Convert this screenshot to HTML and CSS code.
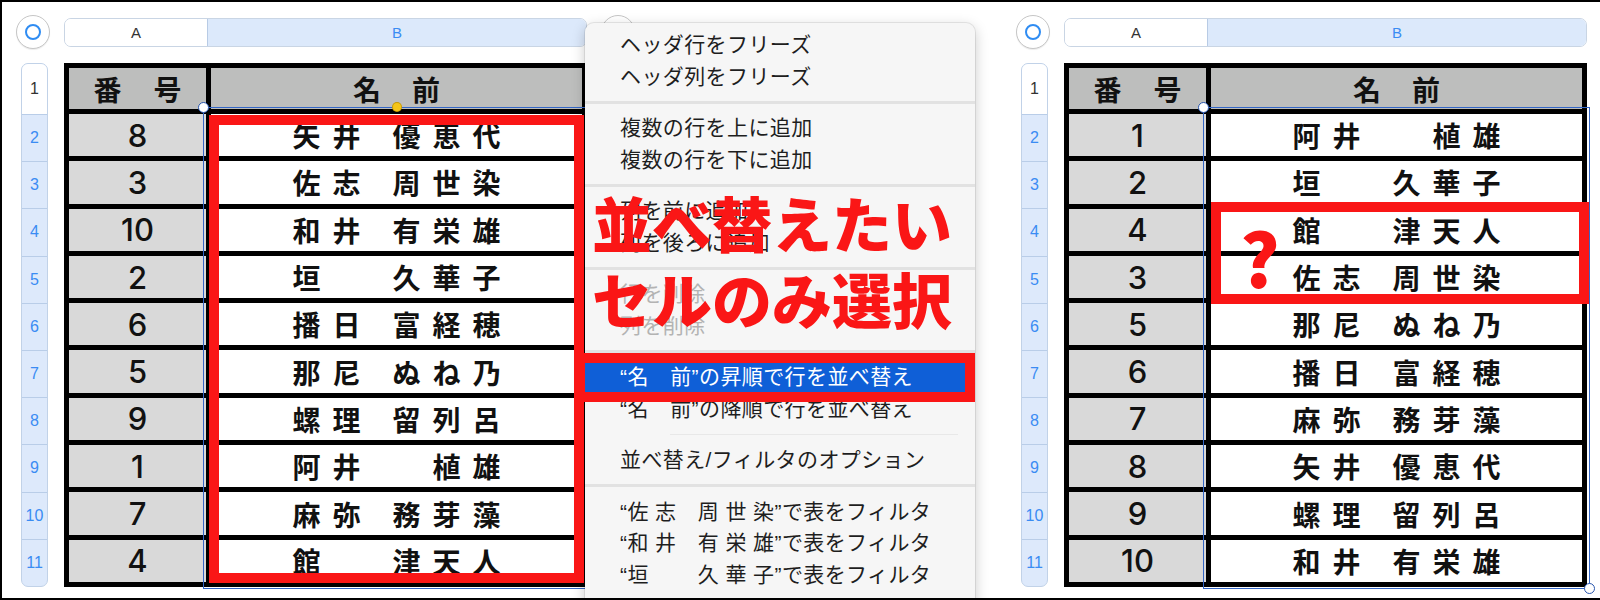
FILE: index.html
```html
<!DOCTYPE html>
<html lang="ja">
<head>
<meta charset="utf-8">
<title>並べ替え</title>
<link rel="stylesheet" href="styles.css">
</head>
<body>
<div class="frame">
  <div class="sheet">
    <div class="corner"><span class="corner-ring"></span></div>
    <div class="colbar">
      <div class="colhead col-a">A</div>
      <div class="colhead col-b">B</div>
    </div>
    <div class="addcol"></div>
    <div class="rowbar">
      <div class="rowhead first">1</div>
      <div class="rowhead">2</div>
      <div class="rowhead">3</div>
      <div class="rowhead">4</div>
      <div class="rowhead">5</div>
      <div class="rowhead">6</div>
      <div class="rowhead">7</div>
      <div class="rowhead">8</div>
      <div class="rowhead">9</div>
      <div class="rowhead">10</div>
      <div class="rowhead">11</div>
    </div>
    <div class="table">
      <div class="cell head hnum"><span>番</span><span>号</span></div>
      <div class="cell head hname"><span>名</span><span>前</span></div>
      <div class="cell num">8</div><div class="cell name"><span class="sei">矢井</span><span class="mei">優恵代</span></div>
      <div class="cell num">3</div><div class="cell name"><span class="sei">佐志</span><span class="mei">周世染</span></div>
      <div class="cell num">10</div><div class="cell name"><span class="sei">和井</span><span class="mei">有栄雄</span></div>
      <div class="cell num">2</div><div class="cell name"><span class="sei">垣　</span><span class="mei">久華子</span></div>
      <div class="cell num">6</div><div class="cell name"><span class="sei">播日</span><span class="mei">富経穂</span></div>
      <div class="cell num">5</div><div class="cell name"><span class="sei">那尼</span><span class="mei">ぬね乃</span></div>
      <div class="cell num">9</div><div class="cell name"><span class="sei">螺理</span><span class="mei">留列呂</span></div>
      <div class="cell num">1</div><div class="cell name"><span class="sei">阿井</span><span class="mei">　植雄</span></div>
      <div class="cell num">7</div><div class="cell name"><span class="sei">麻弥</span><span class="mei">務芽藻</span></div>
      <div class="cell num">4</div><div class="cell name"><span class="sei">館　</span><span class="mei">津天人</span></div>
    </div>
  </div>

  <div class="sheet right">
    <div class="corner"><span class="corner-ring"></span></div>
    <div class="colbar">
      <div class="colhead col-a">A</div>
      <div class="colhead col-b">B</div>
    </div>
    <div class="addcol"></div>
    <div class="rowbar">
      <div class="rowhead first">1</div>
      <div class="rowhead">2</div>
      <div class="rowhead">3</div>
      <div class="rowhead">4</div>
      <div class="rowhead">5</div>
      <div class="rowhead">6</div>
      <div class="rowhead">7</div>
      <div class="rowhead">8</div>
      <div class="rowhead">9</div>
      <div class="rowhead">10</div>
      <div class="rowhead">11</div>
    </div>
    <div class="table">
      <div class="cell head hnum"><span>番</span><span>号</span></div>
      <div class="cell head hname"><span>名</span><span>前</span></div>
      <div class="cell num">1</div><div class="cell name"><span class="sei">阿井</span><span class="mei">　植雄</span></div>
      <div class="cell num">2</div><div class="cell name"><span class="sei">垣　</span><span class="mei">久華子</span></div>
      <div class="cell num">4</div><div class="cell name"><span class="sei">館　</span><span class="mei">津天人</span></div>
      <div class="cell num">3</div><div class="cell name"><span class="sei">佐志</span><span class="mei">周世染</span></div>
      <div class="cell num">5</div><div class="cell name"><span class="sei">那尼</span><span class="mei">ぬね乃</span></div>
      <div class="cell num">6</div><div class="cell name"><span class="sei">播日</span><span class="mei">富経穂</span></div>
      <div class="cell num">7</div><div class="cell name"><span class="sei">麻弥</span><span class="mei">務芽藻</span></div>
      <div class="cell num">8</div><div class="cell name"><span class="sei">矢井</span><span class="mei">優恵代</span></div>
      <div class="cell num">9</div><div class="cell name"><span class="sei">螺理</span><span class="mei">留列呂</span></div>
      <div class="cell num">10</div><div class="cell name"><span class="sei">和井</span><span class="mei">有栄雄</span></div>
    </div>
  </div>

  <div class="sel sel-left"></div>
  <div class="handle h-left"></div>
  <div class="ydot"></div>
  <div class="sel sel-right"></div>
  <div class="handle h-right"></div>
  <div class="handle h-br"></div>

  <div class="menu">
    <div class="mi">ヘッダ行をフリーズ</div>
    <div class="mi">ヘッダ列をフリーズ</div>
    <div class="msep"></div>
    <div class="mi">複数の行を上に追加</div>
    <div class="mi">複数の行を下に追加</div>
    <div class="msep"></div>
    <div class="mi">列を前に追加</div>
    <div class="mi">列を後ろに追加</div>
    <div class="msep"></div>
    <div class="mi off">行を削除</div>
    <div class="mi off">列を削除</div>
    <div class="msep"></div>
    <div class="mi on">“名　前”の昇順で行を並べ替え</div>
    <div class="mi">“名　前”の降順で行を並べ替え</div>
    <div class="msep thin"></div>
    <div class="mi">並べ替え/フィルタのオプション</div>
    <div class="msep"></div>
    <div class="mi">“佐 志　周 世 染”で表をフィルタ</div>
    <div class="mi">“和 井　有 栄 雄”で表をフィルタ</div>
    <div class="mi">“垣　 　久 華 子”で表をフィルタ</div>
  </div>

  <div class="redbox rb-left"></div>
  <div class="redbox rb-menu"></div>
  <div class="redbox rb-right"></div>
  <div class="callout">並べ替えたい<br>セルのみ選択</div>
  <div class="qmark">?</div>
</div>
</body>
</html>
```

FILE: styles.css
```css
html, body {
  margin: 0;
  padding: 0;
  background: #fff;
}

.frame {
  position: relative;
  width: 1600px;
  height: 600px;
  overflow: hidden;
  background: #fff;
  display: flex;
  font-family: "Liberation Sans", "Noto Sans CJK JP", sans-serif;
}

.frame::after {
  content: "";
  position: absolute;
  inset: 0;
  border-top: 2px solid #000;
  border-left: 2px solid #000;
  border-bottom: 2px solid #000;
  z-index: 20;
  pointer-events: none;
}

/* ---------- sheet ---------- */
.sheet {
  flex: none;
  width: 1000px;
  box-sizing: border-box;
  padding: 15px 0 0 16px;
  display: grid;
  grid-template-columns: 34px 523px 34px;
  grid-template-rows: 34px 524px;
  column-gap: 14px;
  row-gap: 14px;
  align-content: start;
}

.sheet.right {
  width: 600px;
}

.corner {
  width: 34px;
  height: 34px;
  box-sizing: border-box;
  border: 1px solid #c6c6c6;
  border-radius: 50%;
  background: #fff;
  box-shadow: 0 1px 1px rgba(0, 0, 0, 0.08);
  display: flex;
  align-items: center;
  justify-content: center;
}

.corner-ring {
  width: 16px;
  height: 16px;
  box-sizing: border-box;
  border: 2px solid #2f8cf2;
  border-radius: 50%;
}

.addcol {
  width: 34px;
  height: 34px;
  box-sizing: border-box;
  border: 1px solid #c6c6c6;
  border-radius: 50%;
  background: #fff;
}

.colbar {
  align-self: center;
  height: 29px;
  box-sizing: border-box;
  display: flex;
  border: 1px solid #c9d5e4;
  border-radius: 7px;
  overflow: hidden;
  font-size: 15px;
}

.colhead {
  display: flex;
  align-items: center;
  justify-content: center;
}

.col-a {
  width: 142px;
  background: #fff;
  color: #333;
  border-right: 1px solid #b8cbe5;
}

.col-b {
  flex: 1;
  background: #dce9fb;
  color: #3a8cf3;
}

.rowbar {
  width: 27px;
  height: 524px;
  margin-left: 5px;
  box-sizing: border-box;
  border: 1px solid #c1d2e8;
  border-radius: 7px;
  overflow: hidden;
  display: grid;
  grid-template-rows: 50px repeat(10, 1fr);
  background: #dde9fb;
}

.rowhead {
  display: flex;
  align-items: center;
  justify-content: center;
  font-size: 16px;
  color: #3a8cf3;
  border-top: 1px solid #b9cde8;
}

.rowhead.first {
  border-top: none;
  background: #fff;
  color: #333;
}

.table {
  display: grid;
  grid-template-columns: 137px 371px;
  grid-template-rows: 41px repeat(10, 42.3px);
  gap: 5px;
  padding: 5px;
  background: #000;
  width: 523px;
  height: 524px;
  box-sizing: border-box;
}

.cell {
  display: flex;
  align-items: center;
  justify-content: center;
}

.cell.head {
  background: #bdbebd;
  font-family: "Noto Sans CJK JP", sans-serif;
  font-weight: 700;
  font-size: 28px;
  color: #111;
}

.hnum {
  gap: 32px;
}

.hname {
  gap: 31px;
}

.cell.num {
  background: #d9d9d9;
  font-family: Inter, "Liberation Sans", sans-serif;
  font-weight: 500;
  font-size: 31px;
  color: #111;
}

.cell.name {
  background: #fff;
  font-family: "Noto Sans CJK JP", sans-serif;
  font-weight: 700;
  font-size: 28px;
  color: #111;
  white-space: pre;
}

.sei,
.mei {
  letter-spacing: 12px;
}

.mei {
  margin-left: 20px;
  margin-right: -12px;
}

/* ---------- selection ---------- */
.sel {
  position: absolute;
  box-sizing: border-box;
  border: 1px solid #3366c6;
  z-index: 2;
}

.sel-left {
  left: 203px;
  top: 107px;
  width: 420px;
  height: 482px;
}

.sel-right {
  left: 1203px;
  top: 107px;
  width: 387px;
  height: 482px;
}

.handle {
  position: absolute;
  width: 11px;
  height: 11px;
  box-sizing: border-box;
  border: 1.5px solid #2a56ad;
  background: #fff;
  border-radius: 50%;
  z-index: 3;
}

.h-left { left: 198px; top: 102px; }
.h-right { left: 1198px; top: 102px; }
.h-br { left: 1584px; top: 583px; }

.ydot {
  position: absolute;
  left: 393px;
  top: 103px;
  width: 8px;
  height: 8px;
  border-radius: 50%;
  background: #f5c518;
  box-shadow: 0 0 0 1px #c99a00;
  z-index: 3;
}

/* ---------- context menu ---------- */
.menu {
  position: absolute;
  left: 585px;
  top: 23px;
  width: 390px;
  height: 620px;
  box-sizing: border-box;
  padding-top: 6px;
  background: #f6f6f6;
  border-radius: 9px;
  box-shadow: 0 0 0 1px rgba(0, 0, 0, 0.08), 0 4px 14px rgba(0, 0, 0, 0.22);
  z-index: 5;
  font-family: "Liberation Sans", "Noto Sans CJK JP", sans-serif;
}

.mi {
  height: 31.5px;
  line-height: 31.5px;
  padding-left: 35px;
  font-size: 21px;
  letter-spacing: 0.4px;
  color: #1e1e1e;
  white-space: pre;
}

.mi.off {
  color: #b3b3b3;
}

.mi.on {
  background: #0f5fd7;
  color: #fff;
}

.msep {
  height: 20px;
  display: flex;
  align-items: center;
}

.msep::before {
  content: "";
  flex: 1;
  height: 3px;
  background: #e2e2e2;
}

.msep.thin::before {
  height: 1px;
  margin: 0 17px 0 85px;
  background: #e8e8e8;
}

/* ---------- annotations ---------- */
.redbox {
  position: absolute;
  box-sizing: border-box;
  border: 10px solid #fa1616;
  z-index: 8;
}

.rb-left {
  left: 209px;
  top: 115px;
  width: 375px;
  height: 468px;
}

.rb-menu {
  left: 575px;
  top: 353px;
  width: 400px;
  height: 49px;
}

.rb-right {
  left: 1211px;
  top: 202px;
  width: 378px;
  height: 102px;
}

.callout {
  position: absolute;
  left: 592px;
  top: 184px;
  font-family: "Noto Sans CJK JP", sans-serif;
  font-weight: 900;
  font-size: 60px;
  line-height: 76px;
  color: #fa1616;
  white-space: nowrap;
  z-index: 9;
}

.qmark {
  position: absolute;
  left: 1240px;
  top: 216px;
  font-family: "Noto Sans CJK JP", sans-serif;
  font-weight: 900;
  font-size: 74px;
  line-height: 80px;
  color: #fa1616;
  z-index: 9;
}
```
